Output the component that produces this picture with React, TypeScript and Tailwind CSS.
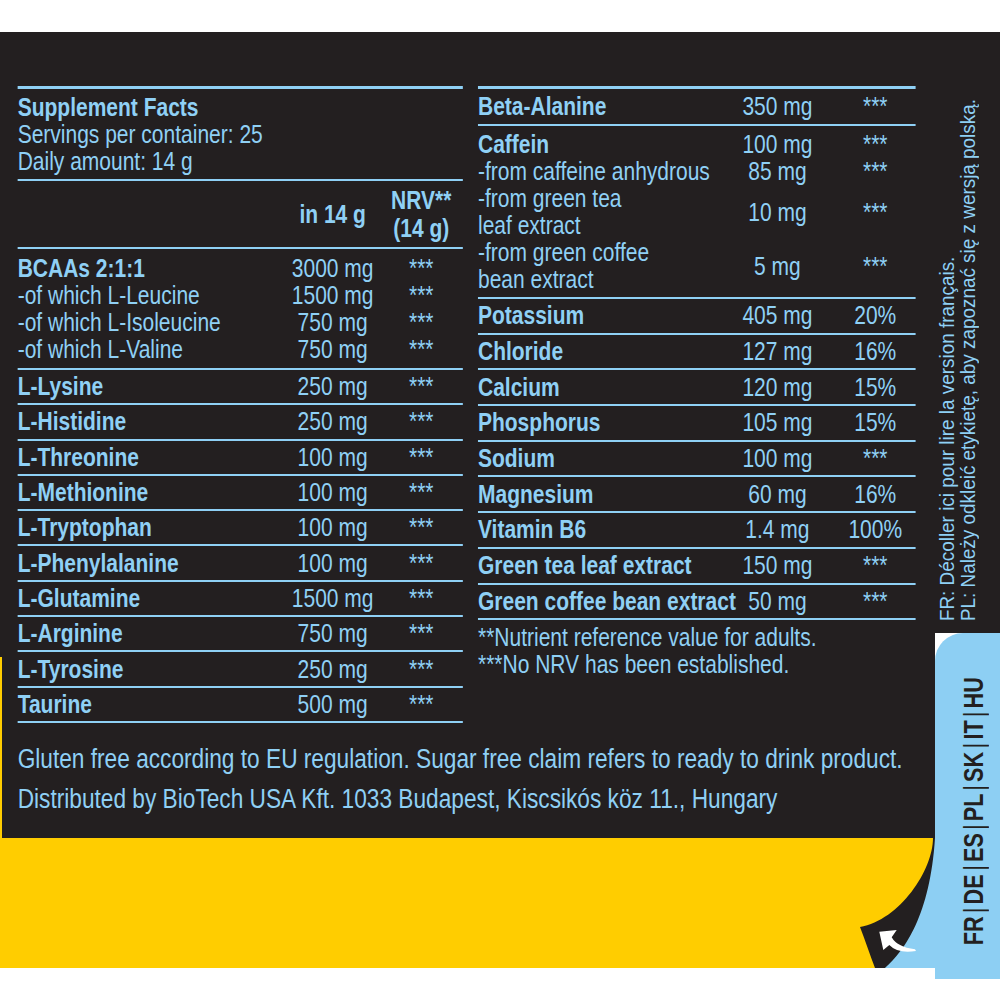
type Row = { name: string; amount: string; nrv: string; bold?: boolean };

const bcaa: Row[] = [
  { name: 'BCAAs 2:1:1', amount: '3000 mg', nrv: '***', bold: true },
  { name: '-of which L-Leucine', amount: '1500 mg', nrv: '***' },
  { name: '-of which L-Isoleucine', amount: '750 mg', nrv: '***' },
  { name: '-of which L-Valine', amount: '750 mg', nrv: '***' },
];

const aminos: Row[] = [
  { name: 'L-Lysine', amount: '250 mg', nrv: '***' },
  { name: 'L-Histidine', amount: '250 mg', nrv: '***' },
  { name: 'L-Threonine', amount: '100 mg', nrv: '***' },
  { name: 'L-Methionine', amount: '100 mg', nrv: '***' },
  { name: 'L-Tryptophan', amount: '100 mg', nrv: '***' },
  { name: 'L-Phenylalanine', amount: '100 mg', nrv: '***' },
  { name: 'L-Glutamine', amount: '1500 mg', nrv: '***' },
  { name: 'L-Arginine', amount: '750 mg', nrv: '***' },
  { name: 'L-Tyrosine', amount: '250 mg', nrv: '***' },
  { name: 'Taurine', amount: '500 mg', nrv: '***' },
];

const caffeine: Row[] = [
  { name: 'Caffein', amount: '100 mg', nrv: '***', bold: true },
  { name: '-from caffeine anhydrous', amount: '85 mg', nrv: '***' },
  { name: '-from green tea\nleaf extract', amount: '10 mg', nrv: '***' },
  { name: '-from green coffee\nbean extract', amount: '5 mg', nrv: '***' },
];

const minerals: Row[] = [
  { name: 'Potassium', amount: '405 mg', nrv: '20%' },
  { name: 'Chloride', amount: '127 mg', nrv: '16%' },
  { name: 'Calcium', amount: '120 mg', nrv: '15%' },
  { name: 'Phosphorus', amount: '105 mg', nrv: '15%' },
  { name: 'Sodium', amount: '100 mg', nrv: '***' },
  { name: 'Magnesium', amount: '60 mg', nrv: '16%' },
  { name: 'Vitamin B6', amount: '1.4 mg', nrv: '100%' },
  { name: 'Green tea leaf extract', amount: '150 mg', nrv: '***' },
  { name: 'Green coffee bean extract', amount: '50 mg', nrv: '***' },
];

const langs = ['FR', 'DE', 'ES', 'PL', 'SK', 'IT', 'HU'];

// the label font is a condensed grotesque, so the whole panel is drawn wide and squeezed
function LeftRow({ row }: { row: Row }) {
  return (
    <div className="grid w-full grid-cols-[1fr_102px_104px] items-center">
      <span className={row.bold ? 'whitespace-nowrap font-bold' : 'whitespace-nowrap'}>{row.name}</span>
      <span className="text-center whitespace-nowrap">{row.amount}</span>
      <span className="pl-[5px] text-center">{row.nrv}</span>
    </div>
  );
}

function RightRow({ row, boldName }: { row: Row; boldName?: boolean }) {
  const bold = boldName || row.bold;
  return (
    <div className="grid w-full grid-cols-[1fr_95px_117px] items-center">
      <span className={bold ? 'whitespace-pre font-bold' : 'whitespace-pre'}>{row.name}</span>
      <span className="text-center whitespace-nowrap">{row.amount}</span>
      <span className="pl-[21px] text-center">{row.nrv}</span>
    </div>
  );
}

function Curl() {
  return (
    <svg className="absolute left-[850px] top-[820px]" width="150" height="148" viewBox="0 0 150 148">
      <path d="M83 18 C83 50 50 100 10 107 C15 120 20 135 25 148 L86 148 L86 18 Z" fill="#231f20" />
      <path d="M35 148 C55 130 80 95 85 18 L86 18 L86 148 Z" fill="#8dcff3" />
      <path
        d="M29.3 111.7 L46.7 110 L41.7 117.3 Q47 127 65 129.3 L66 131 Q48 134 39.3 125 L33.3 130 Z"
        fill="#ffffff"
      />
    </svg>
  );
}

export default function App() {
  return (
    <div className="relative h-[1000px] w-[1000px] overflow-hidden bg-white font-['Liberation_Sans',Arial,sans-serif] text-[25px] text-[#8fd0f5]">
      <div className="h-[32px]" />
      <div className="flex h-[936px]">
        <div className="flex w-[935px] flex-col">
          <div className="relative h-[806px] overflow-hidden bg-[#231f20] pt-[54px]">
            <div className="absolute left-0 top-[625px] bottom-0 w-[2px] bg-[#ffcd00]" />
            <div className="w-[1113px] origin-top-left scale-x-[0.84] pl-[21px]">
              <div className="flex gap-[18px]">
                <div className="w-[530px] leading-[27px]">
                  <div className="border-t-[3px] border-b-2 border-[#8fd0f5] pt-[5px] pb-[4px]">
                    <p className="font-bold">Supplement Facts</p>
                    <p>Servings per container: 25</p>
                    <p>Daily amount: 14 g</p>
                  </div>
                  <div className="grid h-[68px] grid-cols-[1fr_102px_104px] items-center border-b-2 border-[#8fd0f5] font-bold">
                    <span />
                    <span className="text-center">in 14 g</span>
                    <span className="pl-[5px] text-center leading-[28px]">
                      NRV**
                      <br />
                      (14 g)
                    </span>
                  </div>
                  <div className="border-b-2 border-[#8fd0f5] pt-[6px] pb-[5px]">
                    {bcaa.map((r) => (
                      <LeftRow key={r.name} row={r} />
                    ))}
                  </div>
                  {aminos.map((r) => (
                    <div key={r.name} className="flex h-[35.3px] items-center border-b-2 border-[#8fd0f5]">
                      <LeftRow row={{ ...r, bold: true }} />
                    </div>
                  ))}
                </div>

                <div className="w-[521px] leading-[27px]">
                  <div className="flex h-[40px] items-center border-t-[3px] border-b-2 border-[#8fd0f5]">
                    <RightRow row={{ name: 'Beta-Alanine', amount: '350 mg', nrv: '***' }} boldName />
                  </div>
                  <div className="border-b-2 border-[#8fd0f5] pt-[5px] pb-[4px]">
                    {caffeine.map((r) => (
                      <RightRow key={r.name} row={r} />
                    ))}
                  </div>
                  {minerals.map((r) => (
                    <div key={r.name} className="flex h-[35.7px] items-center border-b-2 border-[#8fd0f5]">
                      <RightRow row={r} boldName />
                    </div>
                  ))}
                  <div className="pt-[4px]">
                    <p>**Nutrient reference value for adults.</p>
                    <p>***No NRV has been established.</p>
                  </div>
                </div>
              </div>
              <div className="mt-[16px] text-[27px] leading-[40px] whitespace-nowrap">
                <p>Gluten free according to EU regulation. Sugar free claim refers to ready to drink product.</p>
                <p>Distributed by BioTech USA Kft. 1033 Budapest, Kiscsikós köz 11., Hungary</p>
              </div>
            </div>
          </div>
          <div className="h-[130px] bg-[#ffcd00]" />
        </div>

        <div className="flex w-[65px] flex-col">
          <div className="flex h-[601px] flex-col justify-center bg-[#231f20] pt-[55px] pl-[1px]">
            <p className="rotate-180 scale-y-[0.9] whitespace-pre text-[21px] leading-[21px] [writing-mode:vertical-rl]">
              {'FR: Décoller ici pour lire la version français.\nPL: Należy odkleić etykietę, aby zapoznać się z wersją polską.'}
            </p>
          </div>
          <div className="flex flex-1 flex-col justify-center rounded-tl-[28px] bg-[#8dcff3] pt-[11px] pl-[26px]">
            <p className="rotate-180 scale-y-[0.8] whitespace-nowrap text-[27px] leading-[27px] font-bold text-[#231f20] [writing-mode:vertical-rl]">
              {langs.map((l, i) => (
                <span key={l}>
                  {i > 0 && <span className="mx-[4px] font-normal">|</span>}
                  {l}
                </span>
              ))}
            </p>
          </div>
        </div>
      </div>
      <Curl />
    </div>
  );
}
